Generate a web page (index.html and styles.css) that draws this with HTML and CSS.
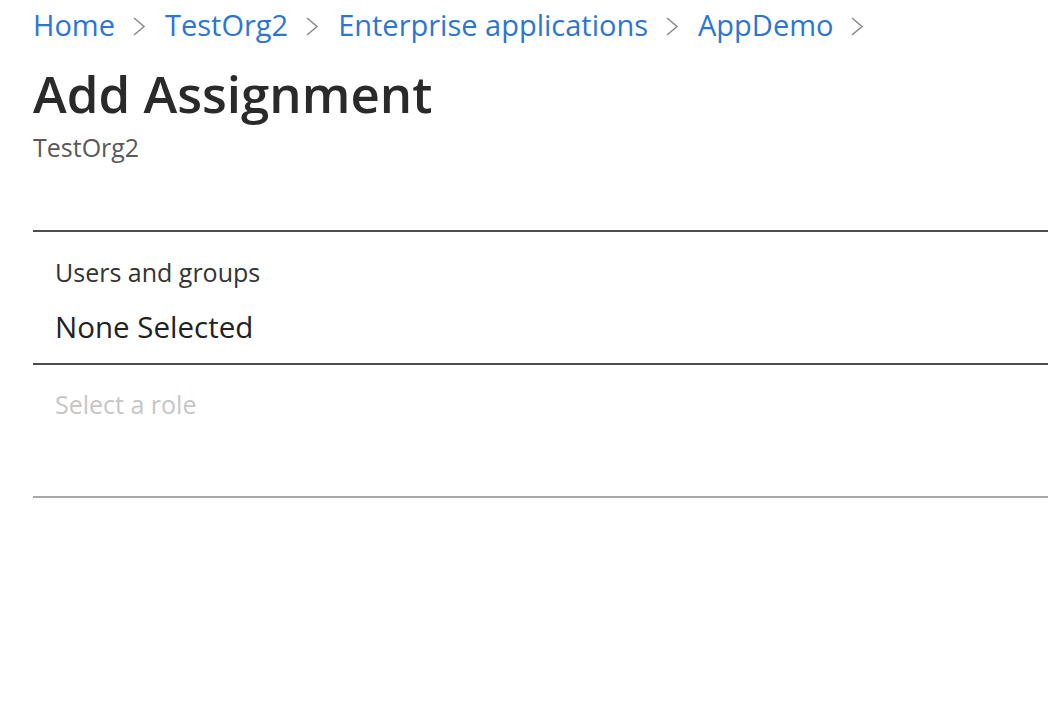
FILE: index.html
```html
<!DOCTYPE html>
<html lang="en">
<head>
<meta charset="utf-8">
<title>Add Assignment</title>
<link rel="stylesheet" href="styles.css">
</head>
<body>
<div class="page">
  <nav class="breadcrumb">
    <a class="crumb">Home</a>
    <svg class="chev" viewBox="0 0 14 19" width="14" height="19"><polyline points="2,1 12,9.5 2,18" fill="none" stroke="#8a8a8a" stroke-width="1.5"/></svg>
    <a class="crumb">TestOrg2</a>
    <svg class="chev" viewBox="0 0 14 19" width="14" height="19"><polyline points="2,1 12,9.5 2,18" fill="none" stroke="#8a8a8a" stroke-width="1.5"/></svg>
    <a class="crumb">Enterprise applications</a>
    <svg class="chev" viewBox="0 0 14 19" width="14" height="19"><polyline points="2,1 12,9.5 2,18" fill="none" stroke="#8a8a8a" stroke-width="1.5"/></svg>
    <a class="crumb">AppDemo</a>
    <svg class="chev" viewBox="0 0 14 19" width="14" height="19"><polyline points="2,1 12,9.5 2,18" fill="none" stroke="#8a8a8a" stroke-width="1.5"/></svg>
  </nav>
  <h1 class="title">Add Assignment</h1>
  <div class="subtitle">TestOrg2</div>
  <div class="form">
    <div class="field field-users">
      <div class="label">Users and groups</div>
      <div class="value">None Selected</div>
    </div>
    <div class="field field-role">
      <div class="placeholder">Select a role</div>
    </div>
  </div>
</div>
</body>
</html>
```
FILE: styles.css
```css
html, body {
  margin: 0;
  padding: 0;
  background: #ffffff;
}
body {
  font-family: "Open Sans", "Noto Sans", sans-serif;
  width: 1048px;
  height: 702px;
  overflow: hidden;
}
.page {
  padding-left: 33px;
}
.breadcrumb {
  display: flex;
  align-items: center;
  height: 48px;
}
.crumb {
  color: #2b76d3;
  font-size: 29px;
}
.chev {
  display: block;
  margin: 4px 19px 0 17px;
}
.title {
  margin: 15px 0 0 0;
  font-size: 51px;
  font-weight: 600;
  color: #2a2a2a;
  line-height: 60px;
}
.subtitle {
  font-size: 25px;
  color: #595959;
  line-height: 30px;
  margin-top: 9px;
}
.form {
  margin-top: 68px;
  border-top: 2px solid #4d4d4d;
}
.field {
  padding-left: 22px;
  box-sizing: border-box;
  height: 133px;
}
.field-users {
  border-bottom: 2px solid #4d4d4d;
  padding-top: 22px;
}
.label {
  font-size: 25px;
  color: #333333;
  line-height: 36px;
}
.value {
  font-size: 29.5px;
  color: #222222;
  line-height: 40px;
  margin-top: 17px;
}
.field-role {
  border-bottom: 2px solid #a8a8a8;
  padding-top: 21px;
}
.placeholder {
  font-size: 25px;
  color: #c6c6c6;
  line-height: 36px;
}
```
